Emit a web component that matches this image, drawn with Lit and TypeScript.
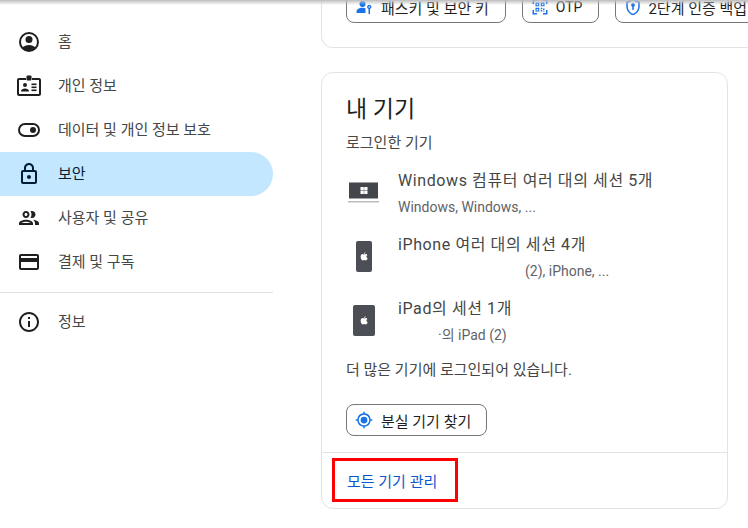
import { LitElement, html, css, svg } from "lit";
import { customElement } from "lit/decorators.js";

const navIcon = (body: unknown) => html`<svg class="nav-icon" viewBox="0 0 24 24" fill="currentColor">${body}</svg>`;

const icons = {
  home: svg`<path fill-rule="evenodd" d="M12 2a10 10 0 1 0 0 20 10 10 0 0 0 0-20zm0 2a8 8 0 1 1 0 16 8 8 0 0 1 0-16z"/><circle cx="12" cy="9.5" r="3.5"/><path d="M5.4 17.4C7.1 15.9 9.4 15 12 15s4.9.9 6.6 2.4C16.9 19.6 14.6 21 12 21s-4.900-1.400-6.600-3.600z"/>`,
  badge: svg`<path fill-rule="evenodd" d="M2 4h7v2H2v14h20V6h-7V4h7c1.100 0 2 .9 2 2v14c0 1.100-.9 2-2 2H2c-1.100 0-2-.9-2-2V6c0-1.100.9-2 2-2z"/><rect x="9.500" y="1.500" width="5" height="5" rx="1"/><circle cx="8" cy="11" r="2"/><path d="M4 17c0-1.500 2-2.500 4-2.500s4 1 4 2.500v.5H4z"/><rect x="14.500" y="9.500" width="5" height="1.600"/><rect x="14.500" y="12.500" width="5" height="1.600"/><rect x="14.500" y="15.500" width="5" height="1.600"/>`,
  toggle: svg`<path fill-rule="evenodd" d="M8 5h8a7 7 0 0 1 0 14H8A7 7 0 0 1 8 5zm0 2a5 5 0 0 0 0 10h8a5 5 0 0 0 0-10H8z"/><circle cx="16" cy="12" r="3"/>`,
  lock: svg`<path d="M18 8h-1V6c0-2.760-2.240-5-5-5S7 3.240 7 6v2H6c-1.100 0-2 .9-2 2v10c0 1.100.9 2 2 2h12c1.100 0 2-.9 2-2V10c0-1.100-.9-2-2-2zM9 6c0-1.660 1.340-3 3-3s3 1.340 3 3v2H9V6zm9 14H6V10h12v10zm-6-3c1.100 0 2-.9 2-2s-.9-2-2-2-2 .9-2 2 .9 2 2 2z"/>`,
  people: svg`<path d="M9 13.750c-2.340 0-7 1.170-7 3.500V19h14v-1.750c0-2.330-4.660-3.500-7-3.500zM4.340 17c.84-.58 2.870-1.250 4.660-1.250s3.820.67 4.660 1.250H4.340zM9 12c1.930 0 3.500-1.570 3.500-3.500S10.930 5 9 5 5.500 6.570 5.500 8.500 7.070 12 9 12zm0-5c.83 0 1.500.67 1.500 1.500S9.830 10 9 10s-1.500-.67-1.500-1.500S8.170 7 9 7zm7.040 6.810c1.160.84 1.960 1.960 1.960 3.440V19h4v-1.750c0-2.020-3.500-3.170-5.960-3.440zM15 12c1.930 0 3.500-1.570 3.500-3.500S16.930 5 15 5c-.54 0-1.040.13-1.500.35.63.89 1 1.980 1 3.150s-.37 2.260-1 3.150c.46.22.96.35 1.500.35z"/>`,
  card: svg`<path d="M20 4H4c-1.110 0-1.990.89-1.990 2L2 18c0 1.110.89 2 2 2h16c1.110 0 2-.89 2-2V6c0-1.110-.89-2-2-2zm0 14H4v-6h16v6zm0-10H4V6h16v2z"/>`,
  info: svg`<path d="M11 7h2v2h-2zm0 4h2v6h-2zm1-9C6.480 2 2 6.480 2 12s4.480 10 10 10 10-4.480 10-10S17.520 2 12 2zm0 18c-4.410 0-8-3.590-8-8s3.590-8 8-8 8 3.590 8 8-3.590 8-8 8z"/>`
};

const navItems = [
  { label: "홈", icon: icons.home },
  { label: "개인 정보", icon: icons.badge },
  { label: "데이터 및 개인 정보 보호", icon: icons.toggle },
  { label: "보안", icon: icons.lock, active: true },
  { label: "사용자 및 공유", icon: icons.people },
  { label: "결제 및 구독", icon: icons.card }
];

const appleMark = svg`<g transform="translate(16 17.500) scale(.75) translate(-16 -17)"><path fill="#fff" d="M16 14.200c.8 0 1.400-.5 2.200-.5 1 0 1.800.5 2.300 1.200-1.800 1.100-1.500 3.500.4 4.300-.4 1.200-1.400 3-2.500 3-.7 0-1.100-.5-2-.5s-1.300.5-2 .5c-1.300 0-2.900-2.700-2.900-5 0-2.200 1.400-3.500 2.800-3.500.8 0 1.200.5 1.700.5zm.1-.6c-.1-1.100.8-2.200 1.900-2.400.1 1.200-.8 2.300-1.900 2.400z"/></g>`;

const laptop = html`<svg class="device" viewBox="0 0 32 36">
  <rect x="1" y="7.500" width="29" height="16" fill="#43464b"/>
  <rect x="0" y="26" width="31" height="1.500" fill="#b9bcc0"/>
  <path fill="#fff" d="M12.500 12h3.300v3.300h-3.300zm3.700 0h3.300v3.300h-3.300zM12.500 15.700h3.300V19h-3.300zm3.700 0h3.300V19h-3.300z"/>
</svg>`;

const phone = html`<svg class="device" viewBox="0 0 32 36">
  <rect x="8" y="2" width="16" height="31" rx="2" fill="#4b4e54"/>
  ${appleMark}
</svg>`;

const tablet = html`<svg class="device" viewBox="0 0 32 36">
  <rect x="5" y="2" width="22" height="31" rx="2" fill="#4b4e54"/>
  ${appleMark}
</svg>`;

const devices = [
  { icon: laptop, title: "Windows 컴퓨터 여러 대의 세션 5개", sub: "Windows, Windows, ...", indent: 0 },
  { icon: phone, title: "iPhone 여러 대의 세션 4개", sub: "(2), iPhone, ...", indent: 127 },
  { icon: tablet, title: "iPad의 세션 1개", sub: "·의 iPad (2)", indent: 40 }
];

@customElement("app-root")
export class AppRoot extends LitElement {
  static styles = css`
    :host {
      display: block;
      width: 748px;
      height: 528px;
      overflow: hidden;
      position: relative;
      background: #fff;
      color: #1f1f1f;
      font-family: Roboto, "Noto Sans CJK KR", sans-serif;
    }

    .layout {
      display: grid;
      grid-template-columns: 273px 1fr;
      column-gap: 48px;
      height: 100%;
    }

    .top-shadow {
      position: absolute;
      inset: 0 0 auto 0;
      height: 5px;
      background: linear-gradient(#bdbdbd, #ffffff00);
    }

    nav {
      padding-top: 20px;
    }

    .nav-row {
      display: flex;
      align-items: center;
      height: 44px;
      padding-left: 17px;
      gap: 17px;
      font-size: 15px;
      color: #444746;
      border-radius: 0 22px 22px 0;
    }

    .nav-row span {
      padding-bottom: 4px;
    }

    .nav-row.active {
      background: #c2e7ff;
      color: #001d35;
    }

    .nav-icon {
      width: 24px;
      height: 24px;
      flex: none;
      color: #1f1f1f;
    }

    .active .nav-icon {
      color: #001d35;
    }

    nav hr {
      border: 0;
      border-top: 1px solid #e0e0e0;
      margin: 8px 0 7px;
    }

    main {
      display: flex;
      flex-direction: column;
      gap: 24px;
      min-width: 0;
    }

    .card-top {
      box-sizing: border-box;
      width: 520px;
      height: 48px;
      display: flex;
      align-items: flex-end;
      gap: 16px;
      padding: 0 0 24px 24px;
      border: 1px solid #e3e3e3;
      border-top: 0;
      border-radius: 0 0 0 12px;
      overflow: hidden;
    }

    .chip {
      box-sizing: border-box;
      display: flex;
      align-items: center;
      flex: none;
      height: 32px;
      padding: 0 16px 0 8px;
      gap: 8px;
      border: 1px solid #747775;
      border-radius: 8px;
      background: #fff;
      font-size: 15px;
      color: #1f1f1f;
      white-space: nowrap;
    }

    .chip.latin {
      font-size: 14px;
      gap: 7px;
    }

    .chip.tight {
      gap: 6px;
    }

    .chip svg {
      width: 18px;
      height: 18px;
      flex: none;
      fill: #1a73e8;
    }

    .card-devices {
      box-sizing: border-box;
      width: 407px;
      height: 437px;
      display: flex;
      flex-direction: column;
      border: 1px solid #e3e3e3;
      border-radius: 12px;
    }

    .body {
      flex: 1;
      padding: 22px 24px 0;
    }

    h2 {
      margin: 0;
      font-size: 23px;
      font-weight: 400;
      line-height: 30px;
    }

    .subtitle {
      margin: 8px 0 8px;
      font-size: 15px;
      line-height: 20px;
      color: #444746;
    }

    .device-row {
      display: flex;
      gap: 18px;
      height: 64px;
      align-items: center;
    }

    .device {
      width: 32px;
      height: 36px;
      flex: none;
      margin-left: 2px;
    }

    .device-title {
      font-size: 16px;
      line-height: 24px;
      letter-spacing: 0.6px;
      color: #444746;
      white-space: nowrap;
    }

    .device-sub {
      margin-top: 4px;
      font-size: 14px;
      line-height: 20px;
      color: #5f6368;
      white-space: nowrap;
    }

    .more {
      margin: 7px 0 0;
      font-size: 15px;
      line-height: 20px;
      color: #444746;
    }

    .find {
      width: 141px;
      margin-top: 24px;
      padding-right: 0;
    }

    footer {
      box-sizing: border-box;
      position: relative;
      height: 56px;
      display: flex;
      align-items: center;
      padding-left: 25px;
      border-top: 1px solid #e3e3e3;
      font-size: 15px;
      color: #0b57d0;
    }

    .highlight {
      position: absolute;
      left: 10px;
      top: 5px;
      width: 126px;
      height: 44px;
      box-sizing: border-box;
      border: 3px solid #ff0000;
    }
  `;

  render() {
    return html`
      <div class="layout">
        <nav>
          ${navItems.map(
            (item) => html`
              <div class="nav-row ${item.active ? "active" : ""}">
                ${navIcon(item.icon)}<span>${item.label}</span>
              </div>
            `
          )}
          <hr />
          <div class="nav-row">${navIcon(icons.info)}<span>정보</span></div>
        </nav>
        <main>
          <section class="card-top">
            <div class="chip">
              <svg viewBox="0 0 24 24">
                <circle cx="10" cy="8" r="4" />
                <path d="M2 20v-2c0-3 4-5 8-5 1.500 0 3 .3 4 .8V20z" />
                <path fill-rule="evenodd" d="M19 9a3 3 0 0 0-1 5.800V21l2 1v-7.200A3 3 0 0 0 19 9zm0 2a1 1 0 1 1 0 2 1 1 0 0 1 0-2z" />
              </svg>
              패스키 및 보안 키
            </div>
            <div class="chip latin">
              <svg viewBox="0 0 24 24">
                <path d="M2 2h6v2H4v4H2zm14 0h6v6h-2V4h-4zM2 16h2v4h4v2H2zm18 0h2v6h-6v-2h4z" />
                <path fill-rule="evenodd" d="M6 6h5v5H6zm1.500 1.500v2h2v-2zM13 6h5v5h-5zm1.500 1.500v2h2v-2zM6 13h5v5H6zm1.500 1.500v2h2v-2z" />
                <path d="M13 13h2v2h-2zm3 1h2v2h-2zm-3 2h2v2h-2zm3 1h2v1h-2z" />
              </svg>
              OTP
            </div>
            <div class="chip tight">
              <svg viewBox="0 0 24 24">
                <path fill-rule="evenodd" d="M12 1 3 5v6c0 5.500 3.800 10.700 9 12 5.200-1.300 9-6.500 9-12V5zm0 2.200L19 6.300V11c0 4.500-3 8.800-7 9.900-4-1.100-7-5.400-7-9.900V6.300z" />
                <path d="M12 7a2.500 2.500 0 0 0-1 4.800V16h2v-4.200A2.500 2.500 0 0 0 12 7z" />
              </svg>
              2단계 인증 백업 코드
            </div>
          </section>
          <section class="card-devices">
            <div class="body">
              <h2>내 기기</h2>
              <p class="subtitle">로그인한 기기</p>
              ${devices.map(
                (d) => html`
                  <div class="device-row">
                    ${d.icon}
                    <div>
                      <div class="device-title">${d.title}</div>
                      <div class="device-sub" style="padding-left:${d.indent}px">${d.sub}</div>
                    </div>
                  </div>
                `
              )}
              <p class="more">더 많은 기기에 로그인되어 있습니다.</p>
              <div class="chip find">
                <svg viewBox="0 0 24 24">
                  <path fill-rule="evenodd" d="M11 1h2v2.100A9 9 0 0 1 20.900 11H23v2h-2.100A9 9 0 0 1 13 20.900V23h-2v-2.100A9 9 0 0 1 3.100 13H1v-2h2.100A9 9 0 0 1 11 3.100zm1 4a7 7 0 1 0 0 14 7 7 0 0 0 0-14z" />
                  <circle cx="12" cy="12" r="4.500" />
                </svg>
                분실 기기 찾기
              </div>
            </div>
            <footer>
              <span>모든 기기 관리</span>
              <div class="highlight"></div>
            </footer>
          </section>
        </main>
      </div>
      <div class="top-shadow"></div>
    `;
  }
}
